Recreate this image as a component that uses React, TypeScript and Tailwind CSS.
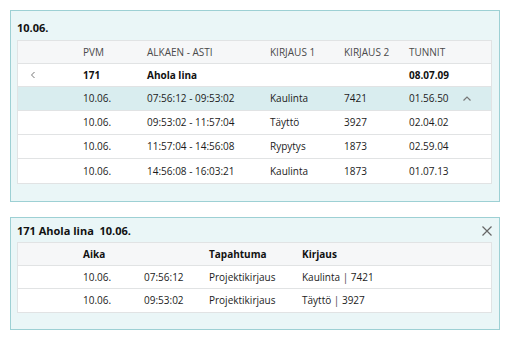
import React from 'react';

interface Row {
    pvm: string;
    range: string;
    k1: string;
    k2: string;
    hours: string;
}

interface EventRow {
    date: string;
    time: string;
    event: string;
    name: string;
    code: string;
}

const rows: Row[] = [
    { pvm: '10.06.', range: '07:56:12 - 09:53:02', k1: 'Kaulinta', k2: '7421', hours: '01.56.50' },
    { pvm: '10.06.', range: '09:53:02 - 11:57:04', k1: 'Täyttö', k2: '3927', hours: '02.04.02' },
    { pvm: '10.06.', range: '11:57:04 - 14:56:08', k1: 'Rypytys', k2: '1873', hours: '02.59.04' },
    { pvm: '10.06.', range: '14:56:08 - 16:03:21', k1: 'Kaulinta', k2: '1873', hours: '01.07.13' },
];

const events: EventRow[] = [
    { date: '10.06.', time: '07:56:12', event: 'Projektikirjaus', name: 'Kaulinta', code: '7421' },
    { date: '10.06.', time: '09:53:02', event: 'Projektikirjaus', name: 'Täyttö', code: '3927' },
];

const cols = 'grid grid-cols-[65px_64px_123px_74px_65px_57px_1fr] items-center';
const cols2 = 'grid grid-cols-[65px_61px_65px_93px_1fr] items-center';

const Chevron: React.FC<{ dir: 'left' | 'up' }> = ({ dir }) => (
    <svg width="10" height="10" viewBox="0 0 10 10" className="text-[#777]">
        {dir === 'left' ? (
            <polyline points="6.5,2 3.5,5 6.5,8" fill="none" stroke="currentColor" strokeWidth="1" />
        ) : (
            <polyline points="1.5,6.5 5,3 8.5,6.5" fill="none" stroke="currentColor" strokeWidth="1.2" />
        )}
    </svg>
);

export default function App() {
    return (
        <div className="flex w-[510px] flex-col gap-[15px] px-[10px] pt-[10px] font-['Open_Sans','Noto_Sans',sans-serif] text-[10px] text-[#1b1b1b]">
            {/* Day summary */}
            <div className="w-[490px] border border-[#9dd0d4] bg-[#eaf6f7] pb-[17px] pl-[6px] pr-[7px]">
                <div className="flex h-[29px] items-center pt-[6px] text-[11px] font-bold text-[#111]">10.06.</div>
                <div className="border border-[#e1e3e4] bg-white">
                    <div className={`${cols} h-[23px] border-b border-[#e1e3e4] bg-[#f6f7f8] text-[#4a4a4a]`}>
                        <div />
                        <div>PVM</div>
                        <div>ALKAEN - ASTI</div>
                        <div>KIRJAUS 1</div>
                        <div>KIRJAUS 2</div>
                        <div>TUNNIT</div>
                        <div />
                    </div>
                    <div className={`${cols} h-[23px] border-b border-[#e1e3e4] font-bold text-[#111]`}>
                        <div className="pl-[10px]">
                            <Chevron dir="left" />
                        </div>
                        <div>171</div>
                        <div>Ahola lina</div>
                        <div />
                        <div />
                        <div>08.07.09</div>
                        <div />
                    </div>
                    {rows.map((r, i) => (
                        <div
                            key={i}
                            className={`${cols} h-[24px] ${i < rows.length - 1 ? 'border-b border-[#e1e3e4]' : ''} ${
                                i === 0 ? 'bg-[#d9edef]' : ''
                            }`}
                        >
                            <div />
                            <div>{r.pvm}</div>
                            <div>{r.range}</div>
                            <div>{r.k1}</div>
                            <div>{r.k2}</div>
                            <div>{r.hours}</div>
                            <div className="-ml-[4px]">{i === 0 && <Chevron dir="up" />}</div>
                        </div>
                    ))}
                </div>
            </div>

            {/* Event detail */}
            <div className="w-[490px] border border-[#9dd0d4] bg-[#eaf6f7] pb-[16px] pl-[6px] pr-[7px]">
                <div className="flex h-[24px] items-center justify-between pt-[2px]">
                    <span className="text-[11px] font-bold text-[#111]">171 Ahola lina&nbsp; 10.06.</span>
                    <svg width="12" height="12" viewBox="0 0 12 12" className="mr-[-1px] text-[#666]">
                        <path d="M1.5 1.5 L10.5 10.5 M10.5 1.5 L1.5 10.5" stroke="currentColor" strokeWidth="1.2" />
                    </svg>
                </div>
                <div className="border border-[#e1e3e4] bg-white">
                    <div className={`${cols2} h-[23px] border-b border-[#e1e3e4] bg-[#f6f7f8] font-bold text-[#111]`}>
                        <div />
                        <div>Aika</div>
                        <div />
                        <div>Tapahtuma</div>
                        <div>Kirjaus</div>
                    </div>
                    {events.map((e, i) => (
                        <div
                            key={i}
                            className={`${cols2} h-[23px] ${i < events.length - 1 ? 'border-b border-[#e1e3e4]' : ''}`}
                        >
                            <div />
                            <div>{e.date}</div>
                            <div>{e.time}</div>
                            <div>{e.event}</div>
                            <div>
                                {e.name} <span className="text-[#444]">|</span> {e.code}
                            </div>
                        </div>
                    ))}
                </div>
            </div>
        </div>
    );
}
